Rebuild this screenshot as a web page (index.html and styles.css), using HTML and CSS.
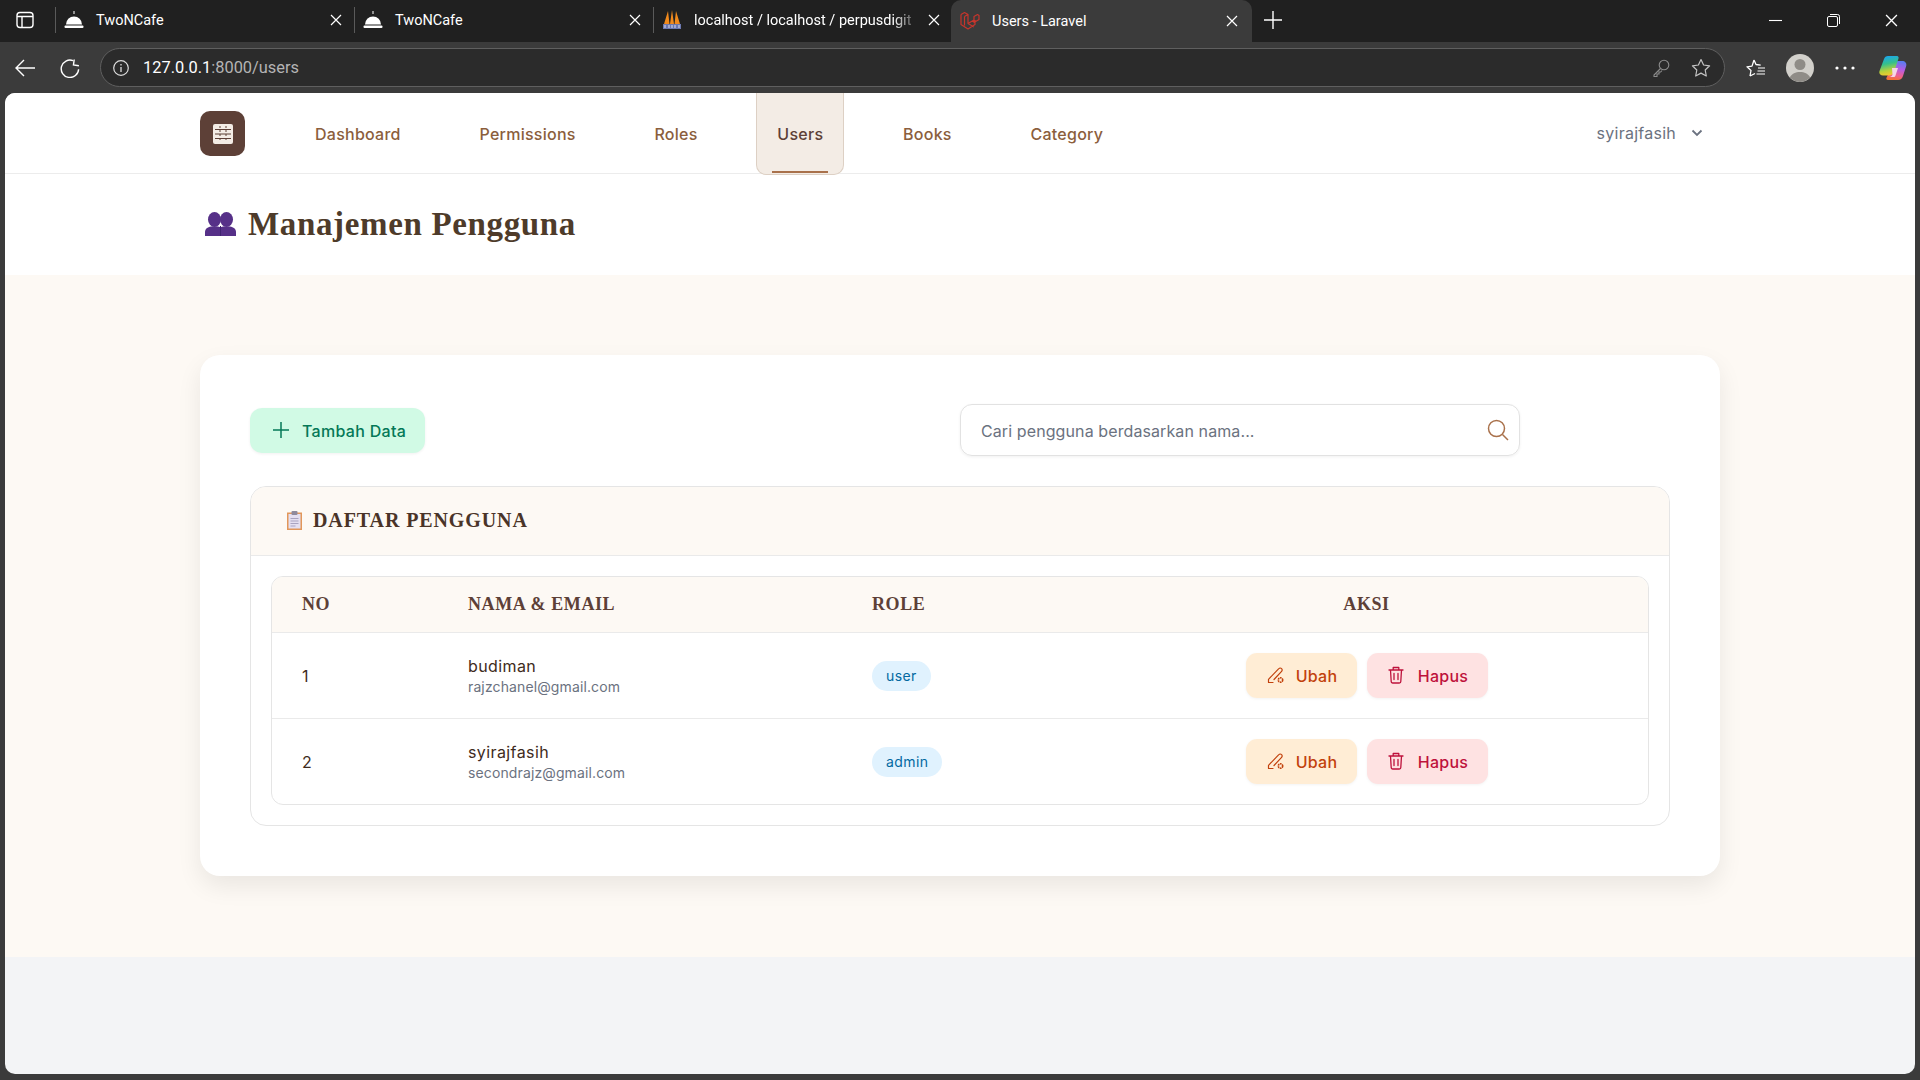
FILE: index.html
```html
<!DOCTYPE html>
<html>
<head>
<meta charset="utf-8">
<title>Users - Laravel</title>
<link rel="stylesheet" href="styles.css">
</head>
<body>
<svg class="defs" width="0" height="0">
	<symbol id="bell" viewBox="0 0 20 20">
		<path d="M10 1v3" stroke="#ddd" stroke-width="1.2"/>
		<path d="M2 14.5a8 8 0 0 1 16 0z" fill="#fff"/>
		<rect x="0.5" y="15.5" width="19" height="2.5" rx="1" fill="#fff"/>
	</symbol>
	<symbol id="close" viewBox="0 0 12 12">
		<path d="M1 1l10 10M11 1L1 11" stroke="#fff" stroke-width="1.2" fill="none"/>
	</symbol>
	<symbol id="edit" viewBox="0 0 18 18">
		<path d="M1.5 16.5v-3.2L11.8 2.6a1.9 1.9 0 0 1 2.8 0 1.9 1.9 0 0 1 0 2.7L7 13.5M1.5 16.5H6" fill="none" stroke="currentColor" stroke-width="1.2" stroke-linecap="round" stroke-linejoin="round"/>
		<circle cx="13.5" cy="14" r="2.2" fill="none" stroke="currentColor" stroke-width="1.6" stroke-dasharray="1.6 .6"/>
	</symbol>
	<symbol id="trash" viewBox="0 0 16 18">
		<path d="M1 4h14M5.200 4V1.500h5.600V4M2.500 4l.7 11.500a1.500 1.500 0 0 0 1.500 1.500h6.600a1.500 1.500 0 0 0 1.500-1.500L13.500 4M6 7.500v6M10 7.500v6" fill="none" stroke="currentColor" stroke-width="1.300" stroke-linecap="round" stroke-linejoin="round"/>
	</symbol>
</svg>

<div class="browser">
	<div class="tabstrip">
		<svg class="panel-icon" width="18" height="18" viewBox="0 0 18 18"><rect x="1" y="1.500" width="16" height="15" rx="3" fill="none" stroke="#fff" stroke-width="1.400"/><path d="M1 5.500h16M6 5.500v11" stroke="#fff" stroke-width="1.400"/></svg>
		<div class="tab">
			<svg class="favicon" width="20" height="20"><use href="#bell"/></svg>
			<span class="tab-title">TwoNCafe</span>
			<svg class="tab-close" width="12" height="12"><use href="#close"/></svg>
		</div>
		<div class="tab">
			<svg class="favicon" width="20" height="20"><use href="#bell"/></svg>
			<span class="tab-title">TwoNCafe</span>
			<svg class="tab-close" width="12" height="12"><use href="#close"/></svg>
		</div>
		<div class="tab">
			<svg class="favicon" width="20" height="22" viewBox="0 0 20 22"><path d="M2 15L6 2l1.500 13zM8 15l2-14 2 14zM12.500 15L14 2l4 13z" fill="#f18a1c"/><path d="M1 15h18v5H1z" fill="#6c78af"/><path d="M3 16v3M7 16v3M10 16v3M13 16v3M17 16v3" stroke="#d8dcf0" stroke-width="1"/></svg>
			<span class="tab-title tab-fade">localhost / localhost / perpusdigit</span>
			<svg class="tab-close" width="12" height="12"><use href="#close"/></svg>
		</div>
		<div class="tab tab-active">
			<svg class="favicon" width="20" height="20" viewBox="0 0 20 20"><path d="M1 3.500l3.500-2 3.500 2v9l6 3.500M8 12.500l6-3.500M1 3.500v10l7 4.500 7-4.500V9M4.500 5.500L8 3.500M4.500 5.500v9M14 5.500l3.500-2 1.500 1v4l-5 3zM14 5.500v4" fill="none" stroke="#c7352c" stroke-width="1.200" stroke-linejoin="round"/></svg>
			<span class="tab-title">Users - Laravel</span>
			<svg class="tab-close" width="12" height="12"><use href="#close"/></svg>
		</div>
		<svg class="new-tab" width="18" height="18" viewBox="0 0 18 18"><path d="M9 0v18M0 9h18" stroke="#fff" stroke-width="1.400"/></svg>
		<div class="window-controls">
			<svg width="13" height="13" viewBox="0 0 13 13"><path d="M0 6.500h13" stroke="#fff" stroke-width="1.100"/></svg>
			<svg width="13" height="13" viewBox="0 0 13 13"><rect x=".5" y="2.500" width="10" height="10" rx="1.500" fill="none" stroke="#fff"/><path d="M3 .5h7.500a2 2 0 0 1 2 2V10" fill="none" stroke="#fff"/></svg>
			<svg width="13" height="13"><use href="#close"/></svg>
		</div>
	</div>

	<div class="toolbar">
		<svg class="tool-back" width="20" height="18" viewBox="0 0 20 18"><path d="M9 1L1 9l8 8M1 9h19" fill="none" stroke="#fff" stroke-width="1.400"/></svg>
		<svg class="tool-reload" width="20" height="20" viewBox="0 0 20 20"><path d="M12 2.300A8.700 8.700 0 1 0 18.700 10M13 1v5.500h5.500" fill="none" stroke="#fff" stroke-width="1.400" transform="rotate(8 10 10)"/></svg>
		<div class="address">
			<svg class="info" width="16" height="16" viewBox="0 0 16 16"><circle cx="8" cy="8" r="7.300" fill="none" stroke="#ddd" stroke-width="1.200"/><path d="M8 7v5M8 4v1.500" stroke="#ddd" stroke-width="1.300"/></svg>
			<span class="url">127.0.0.1<span class="url-dim">:8000/users</span></span>
			<svg class="key" width="18" height="18" viewBox="0 0 18 18"><circle cx="12" cy="6" r="4.800" fill="none" stroke="#8c8c8c" stroke-width="1.100"/><path d="M8.500 9.500L2 16v1.500h3V15h2v-2h1.700L10 11.500" fill="none" stroke="#8c8c8c" stroke-width="1.100"/></svg>
			<svg class="star" width="20" height="20" viewBox="0 0 20 20"><path d="M10 1.500l2.600 5.500 6 .8-4.400 4.200 1.100 6L10 15.100 4.700 18l1.100-6L1.400 7.800l6-.8z" fill="none" stroke="#c4c4c4" stroke-width="1.200" stroke-linejoin="round"/></svg>
		</div>
		<svg class="favs" width="20" height="20" viewBox="0 0 20 20"><path d="M9 2l2 4.500 4.700.6M5 18l1-5.500-4-3.700 5-.7L9 2M5 18l5-2.500" fill="none" stroke="#fff" stroke-width="1.300" stroke-linejoin="round"/><path d="M13 10h7M12.500 13h7.500M11.500 16h8.500" stroke="#fff" stroke-width="1.200"/></svg>
		<svg class="avatar" width="28" height="28" viewBox="0 0 28 28"><circle cx="14" cy="14" r="14" fill="#d2d0cb"/><circle cx="14" cy="10.500" r="5.500" fill="#8f8c87"/><path d="M3.800 23.500C6 19.500 9.500 18 14 18s8 1.500 10.200 5.500a14 14 0 0 1-20.400 0z" fill="#8f8c87"/></svg>
		<svg class="dots" width="22" height="4" viewBox="0 0 22 4"><circle cx="3" cy="2" r="1.600" fill="#fff"/><circle cx="11" cy="2" r="1.600" fill="#fff"/><circle cx="19" cy="2" r="1.600" fill="#fff"/></svg>
		<svg class="copilot" width="28" height="26" viewBox="0 0 28 26">
			<defs>
				<linearGradient id="cp-a" x1="0.300" y1="0" x2="0.500" y2="1"><stop offset="0" stop-color="#1aa5f2"/><stop offset=".4" stop-color="#35c08c"/><stop offset=".75" stop-color="#b9d13a"/><stop offset="1" stop-color="#f6c72e"/></linearGradient>
				<linearGradient id="cp-b" x1="0.600" y1="0" x2="0.400" y2="1"><stop offset="0" stop-color="#5a7cf0"/><stop offset=".4" stop-color="#b35ce6"/><stop offset=".75" stop-color="#ee5f8e"/><stop offset="1" stop-color="#f5732e"/></linearGradient>
			</defs>
			<path d="M16 6h7c3 0 5 2 4.200 5L24 21c-.8 2.800-2.500 4-5 4H9c-1.500 0-2-1-1.500-2.200L15 8c.2-1 .4-2 1-2z" fill="url(#cp-b)"/>
			<path d="M9 1h8.500c1.500 0 2.500 1 2 2.500L15 17c-.8 2.300-2.500 3.500-5 3.500H4C1.200 20.500-.3 18.500.5 16L5 4C5.700 2 7 1 9 1z" fill="url(#cp-a)"/>
			<path d="M13 13h6l-2.500 7.500c-.3 1-1 1.500-2 1.500H10c2 0 3-1 3.500-2.500z" fill="#f6d7e6"/>
		</svg>
	</div>

	<div class="viewport">
		<nav class="navbar">
			<div class="container nav-row">
				<div class="logo">
					<svg width="20" height="20" viewBox="0 0 20 20"><rect width="20" height="20" rx="2" fill="#f3ece5"/><path d="M2 5.500h16M2 10h16M2 14.500h16" stroke="#5d4037" stroke-width="1.200"/><path d="M7 2v16M13 2v16" stroke="#5d4037" stroke-width="1" stroke-dasharray="2 2"/></svg>
				</div>
				<ul class="nav-links">
					<li class="nav-link">Dashboard</li>
					<li class="nav-link">Permissions</li>
					<li class="nav-link">Roles</li>
					<li class="nav-link nav-current">Users</li>
					<li class="nav-link">Books</li>
					<li class="nav-link">Category</li>
				</ul>
				<div class="user-menu">
					<span>syirajfasih</span>
					<svg width="12" height="8" viewBox="0 0 12 8"><path d="M1.500 1.500L6 6l4.500-4.500" fill="none" stroke="#6b7280" stroke-width="1.800"/></svg>
				</div>
			</div>
		</nav>

		<header class="page-head">
			<div class="container title-row">
				<svg class="title-icon" width="31" height="24" viewBox="0 0 31 24">
					<g fill="#563088">
						<ellipse cx="9.500" cy="7.500" rx="6.500" ry="7.500"/>
						<ellipse cx="21.500" cy="7.500" rx="6.500" ry="7.500"/>
						<path d="M0 24v-4c0-3 2.500-5 6-5.500h7c4 .5 6 2.500 6 5.500v4z"/>
						<path d="M12 24v-4c0-3 2-5 6-5.500h7c3.500 .5 6 2.500 6 5.500v4z"/>
					</g>
					<path d="M15.500 14v10" stroke="#3f2270" stroke-width="1"/>
				</svg>
				<h1>Manajemen Pengguna</h1>
			</div>
		</header>

		<main class="page-body">
			<div class="container">
				<section class="card">
					<div class="card-top">
						<button class="btn-add">
							<svg width="16" height="16" viewBox="0 0 16 16"><path d="M8 0v16M0 8h16" stroke="#047857" stroke-width="1.500"/></svg>
							<span class="btn-label">Tambah Data</span>
						</button>
						<div class="search">
							<span class="search-text">Cari pengguna berdasarkan nama...</span>
							<svg width="22" height="22" viewBox="0 0 22 22"><circle cx="9.500" cy="9.500" r="8" fill="none" stroke="#a9714b" stroke-width="1.500"/><path d="M15.500 15.500L21 21" stroke="#a9714b" stroke-width="1.500"/></svg>
						</div>
					</div>

					<div class="list-panel">
						<div class="list-head">
							<svg class="list-icon" width="15" height="19" viewBox="0 0 15 19"><rect y="1.500" width="15" height="17.500" fill="#e2975a"/><rect x="1.500" y="3" width="12" height="14.500" fill="#e4dff0"/><path d="M3.500 7.500h8M3.500 10h8M3.500 12.500h8M3.500 15h5" stroke="#a9a3c0"/><rect x="4.500" y="0" width="6" height="4" rx="1" fill="#8f8a9c"/></svg>
							<h2>DAFTAR PENGGUNA</h2>
						</div>
						<div class="list-inner">
							<table>
								<colgroup>
									<col class="col-no">
									<col class="col-name">
									<col class="col-role">
									<col>
								</colgroup>
								<thead>
									<tr>
										<th>NO</th>
										<th>NAMA &amp; EMAIL</th>
										<th>ROLE</th>
										<th class="th-action">AKSI</th>
									</tr>
								</thead>
								<tbody>
									<tr>
										<td>1</td>
										<td>
											<div class="user-name">budiman</div>
											<div class="user-email">rajzchanel@gmail.com</div>
										</td>
										<td><span class="badge">user</span></td>
										<td class="td-action">
											<div class="actions">
												<button class="btn btn-edit"><svg width="18" height="18"><use href="#edit"/></svg><span class="btn-label">Ubah</span></button>
												<button class="btn btn-delete"><svg width="16" height="18"><use href="#trash"/></svg><span class="btn-label">Hapus</span></button>
											</div>
										</td>
									</tr>
									<tr>
										<td>2</td>
										<td>
											<div class="user-name">syirajfasih</div>
											<div class="user-email">secondrajz@gmail.com</div>
										</td>
										<td><span class="badge">admin</span></td>
										<td class="td-action">
											<div class="actions">
												<button class="btn btn-edit"><svg width="18" height="18"><use href="#edit"/></svg><span class="btn-label">Ubah</span></button>
												<button class="btn btn-delete"><svg width="16" height="18"><use href="#trash"/></svg><span class="btn-label">Hapus</span></button>
											</div>
										</td>
									</tr>
								</tbody>
							</table>
						</div>
					</div>
				</section>
			</div>
		</main>
		<div class="page-foot"></div>
	</div>
</div>
</body>
</html>
```
FILE: styles.css
```css
* {
	box-sizing: border-box;
}
html, body {
	height: 100%;
}
body {
	margin: 0;
	background-color: #3b3b3b;
	font-family: Inter, "Liberation Sans", sans-serif;
	overflow: hidden;
}
button {
	font-family: inherit;
	border: none;
	cursor: pointer;
}
.defs {
	display: block;
	height: 0;
}
.browser {
	display: flex;
	flex-direction: column;
	height: 1080px;
}

/* browser chrome */
.tabstrip {
	display: flex;
	align-items: center;
	height: 42px;
	background-color: #202020;
	color: #fff;
	font-family: Roboto, sans-serif;
}
.panel-icon {
	margin: 0 21px 2px 16px;
	flex: none;
}
.tab {
	display: flex;
	align-items: center;
	width: 299px;
	height: 26px;
	margin-bottom: 2px;
	padding-left: 8px;
	border-left: 1px solid #5a5a5a;
	flex: none;
	font-size: 14.5px;
}
.favicon {
	flex: none;
	margin-right: 12px;
}
.tab-title {
	width: 226px;
	white-space: nowrap;
	flex: none;
}
.tab-fade {
	-webkit-mask-image: linear-gradient(to right, #000 88%, transparent 100%);
	mask-image: linear-gradient(to right, #000 88%, transparent 100%);
}
.tab-close {
	flex: none;
	margin-left: 8px;
}
.tab-active {
	width: 301px;
	height: 42px;
	margin: 0 0 0 -1px;
	padding-left: 9px;
	background-color: #3b3b3b;
	border-left: none;
	border-radius: 10px 10px 0 0;
}
.new-tab {
	margin: 0 0 2px 12px;
}
.window-controls {
	display: flex;
	gap: 45px;
	margin: 0 22px 2px auto;
}
.toolbar {
	display: flex;
	align-items: center;
	height: 51px;
	background-color: #3b3b3b;
	flex: none;
}
.tool-back {
	margin-left: 15px;
}
.tool-reload {
	margin-left: 25px;
}
.address {
	display: flex;
	align-items: center;
	width: 1625px;
	height: 39px;
	margin-left: 20px;
	padding: 0 13px 0 12px;
	background-color: #2b2b2b;
	border: 1px solid #5f5f5f;
	border-radius: 20px;
}
.url {
	margin-left: 14px;
	font-family: Roboto, sans-serif;
	font-size: 16.4px;
	color: #fff;
}
.url-dim {
	color: #b4b4b4;
}
.key {
	margin-left: auto;
}
.star {
	margin-left: 21px;
}
.favs {
	margin-left: 20px;
}
.avatar {
	margin-left: 21px;
}
.dots {
	margin-left: 20px;
}
.copilot {
	margin-left: 23px;
}

/* page */
.viewport {
	display: flex;
	flex-direction: column;
	height: 981px;
	margin: 0 5px;
	border-radius: 10px;
	overflow: hidden;
	background-color: #f3f4f6;
	letter-spacing: 0.25px;
}
.container {
	width: 1520px;
	margin: 0 auto;
}
.navbar {
	height: 81px;
	background-color: #fff;
	border-bottom: 1px solid #ececec;
	flex: none;
}
.nav-row {
	display: flex;
	align-items: flex-start;
}
.logo {
	display: flex;
	align-items: center;
	justify-content: center;
	width: 45px;
	height: 45px;
	margin-top: 18px;
	border-radius: 10px;
	background-color: #5d4037;
	flex: none;
}
.nav-links {
	display: flex;
	gap: 38.8px;
	list-style: none;
	margin: 0 0 0 50px;
	padding: 0;
}
.nav-link {
	display: flex;
	align-items: center;
	height: 80px;
	padding: 2px 20px 0;
	font-size: 16px;
	font-weight: 500;
	color: #8b5e3c;
}
.nav-current {
	position: relative;
	height: 82px;
	color: #5d4037;
	background-color: #f3ece5;
	border: 1px solid #ddd0c4;
	border-top: none;
	border-radius: 0 0 10px 10px;
	padding: 0 20px;
}
.nav-current::after {
	content: "";
	position: absolute;
	left: 15px;
	right: 15px;
	bottom: 1px;
	height: 2px;
	background-color: #a9714b;
}
.user-menu {
	display: flex;
	align-items: center;
	gap: 15px;
	height: 79px;
	margin-left: auto;
	padding-right: 17px;
	font-size: 16px;
	color: #6b7280;
}
.page-head {
	height: 101px;
	background-color: #fff;
	flex: none;
}
.title-row {
	display: flex;
	align-items: center;
	gap: 12px;
	height: 100px;
	padding-left: 5px;
}
h1 {
	margin: 0;
	font-family: "Liberation Serif", serif;
	font-size: 33px;
	font-weight: 700;
	letter-spacing: 0.65px;
	color: #4e3b2a;
}
.page-body {
	height: 682px;
	padding-top: 80px;
	background-color: #fdf9f4;
	flex: none;
}
.card {
	height: 521px;
	padding: 50px;
	background-color: #fff;
	border-radius: 20px;
	box-shadow: 0 10px 25px rgba(0, 0, 0, 0.08);
}
.card-top {
	display: flex;
	align-items: center;
	justify-content: space-between;
	height: 52px;
	padding-right: 150px;
	margin-top: -1px;
}
.btn-add {
	display: flex;
	align-items: center;
	gap: 13px;
	width: 175px;
	height: 45px;
	padding: 0 0 0 23px;
	border-radius: 12px;
	background-color: #d1fae5;
	color: #047857;
	font-size: 16px;
	font-weight: 450;
	letter-spacing: 0.3px;
	box-shadow: 0 1px 3px rgba(0, 0, 0, 0.06);
}
.btn-label {
	padding-top: 2px;
}
.search {
	display: flex;
	align-items: center;
	justify-content: space-between;
	width: 560px;
	height: 52px;
	padding: 0 10px 0 20px;
	border: 1px solid #e2e2e2;
	border-radius: 12px;
	box-shadow: 0 1px 3px rgba(0, 0, 0, 0.06);
	font-size: 16px;
	letter-spacing: 0.1px;
	color: #6b7280;
}
.search-text {
	padding-top: 2px;
}
.list-panel {
	height: 340px;
	margin-top: 30px;
	padding-bottom: 20px;
	border: 1px solid #e5e5e5;
	border-radius: 16px;
	overflow: hidden;
}
.list-head {
	display: flex;
	align-items: center;
	gap: 11px;
	height: 69px;
	padding-left: 36px;
	background-color: #fdf9f4;
	border-bottom: 1px solid #eaeaea;
}
.list-icon {
	margin-bottom: 2px;
}
h2 {
	margin: 0 0 1px;
	font-family: "Liberation Serif", serif;
	font-size: 20px;
	font-weight: 700;
	letter-spacing: 0.9px;
	color: #4a3428;
}
.list-inner {
	margin: 20px 20px 0;
	border: 1px solid #e5e5e5;
	border-radius: 12px;
	overflow: hidden;
}
table {
	width: 100%;
	border-collapse: collapse;
	table-layout: fixed;
}
.col-no {
	width: 165px;
}
.col-name {
	width: 404px;
}
.col-role {
	width: 244px;
}
th {
	height: 55px;
	padding: 0 0 0 30px;
	text-align: left;
	background-color: #fdf9f4;
	font-family: "Liberation Serif", serif;
	font-size: 18px;
	font-weight: 700;
	letter-spacing: 0.6px;
	color: #5d4037;
	border-bottom: 1px solid #eaeaea;
}
th:nth-child(n+2) {
	padding-left: 31px;
}
th.th-action {
	padding: 0;
	text-align: center;
}
td {
	height: 86px;
	padding: 2px 0 0 30px;
	font-size: 16px;
	color: #3e2b20;
}
td:nth-child(n+2) {
	padding-left: 31px;
}
td.td-action {
	padding: 0;
}
tbody tr + tr td {
	border-top: 1px solid #eaeaea;
}
.user-name {
	font-size: 16px;
	font-weight: 400;
	line-height: 20px;
	letter-spacing: 0.4px;
}
.user-email {
	font-size: 14px;
	line-height: 21px;
	letter-spacing: 0.12px;
	color: #6b7280;
}
.badge {
	display: inline-block;
	padding: 0 14px;
	height: 30px;
	line-height: 30px;
	border-radius: 15px;
	background-color: #e0f2fe;
	color: #0369a1;
	font-size: 14px;
	font-weight: 400;
	letter-spacing: 0.4px;
}
td .actions {
	display: flex;
	justify-content: center;
	gap: 10px;
}
.btn {
	display: flex;
	align-items: center;
	justify-content: center;
	gap: 11px;
	height: 45px;
	padding: 0 0 0 2px;
	border-radius: 11px;
	font-size: 16px;
	font-weight: 450;
	letter-spacing: 0.25px;
	box-shadow: 0 1px 3px rgba(0, 0, 0, 0.05);
}
.btn-edit {
	width: 111px;
	background-color: #ffedd5;
	color: #c2410c;
}
.btn-delete {
	width: 121px;
	gap: 14px;
	background-color: #fee2e2;
	color: #be123c;
}
.page-foot {
	flex: 1;
}
```
